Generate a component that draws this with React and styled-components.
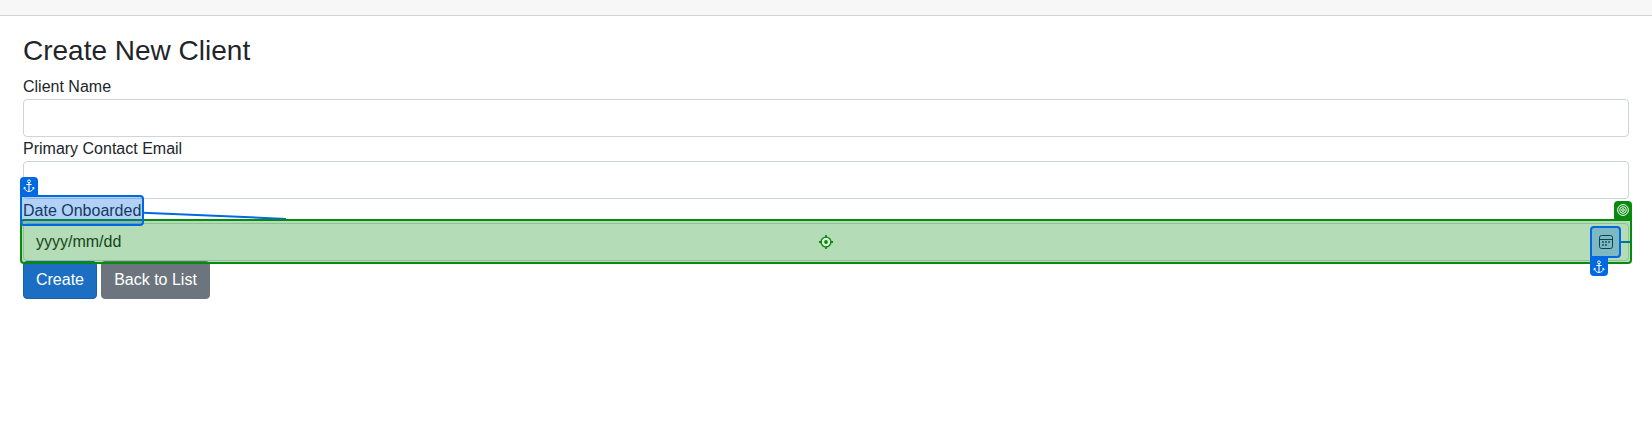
import React from "react";
import styled, { createGlobalStyle } from "styled-components";

const BLUE = "#0068e0";
const GREEN = "#078a0d";

const GlobalStyle = createGlobalStyle`
  *, *::before, *::after { box-sizing: border-box; }
  body {
    margin: 0;
    background: #fff;
    color: #212529;
    font: 400 16px/1.5 "Liberation Sans", Arial, sans-serif;
    overflow: hidden;
  }
`;

const Page = styled.div`
  min-height: 439px;
`;

const TopBar = styled.header`
  height: 16px;
  background: #f7f7f7;
  border-bottom: 1px solid #d2d4d6;
`;

const Form = styled.form`
  padding: 18px 23px 0;
`;

const Title = styled.h3`
  margin: 0 0 7px;
  font-size: 28px;
  font-weight: 400;
  line-height: 34px;
`;

const Field = styled.div`
  position: relative;
  display: flex;
  flex-direction: column;
  align-items: flex-start;
`;

const Label = styled.label`
  position: relative;
  height: 24px;
  line-height: 24px;
`;

const Control = styled.div`
  position: relative;
  display: flex;
  align-items: center;
  justify-content: space-between;
  width: 100%;
  height: 38px;
  padding: 0 15px 0 12px;
  border: 1px solid #ced4da;
  border-radius: 4px;
  background: #fff;
`;

const Actions = styled.div`
  display: flex;
  gap: 4px;
`;

const Button = styled.button`
  height: 38px;
  width: ${(p) => p.$width}px;
  padding: 0;
  border: 1px solid ${(p) => p.$border};
  border-radius: 4px;
  background: ${(p) => p.$color};
  color: #fff;
  font: inherit;
`;

const Highlight = styled.div`
  position: absolute;
  z-index: ${(p) => (p.$tone === "blue" ? 3 : 2)};
  inset: ${(p) => p.$inset};
  display: flex;
  align-items: center;
  justify-content: center;
  border: 2px solid ${(p) => (p.$tone === "blue" ? BLUE : GREEN)};
  border-radius: ${(p) => p.$radius || "4px"};
  background: ${(p) =>
    p.$tone === "blue" ? "rgba(0, 104, 224, 0.3)" : "rgba(7, 138, 13, 0.3)"};
`;

const Badge = styled.span`
  position: absolute;
  display: flex;
  align-items: center;
  justify-content: center;
  width: 18px;
  height: 18px;
  ${(p) => (p.$below ? "top: calc(100% + 2px);" : "bottom: calc(100% + 2px);")}
  ${(p) => (p.$right ? "right: -2px;" : "left: -2px;")}
  border-radius: ${(p) => (p.$below ? "0 0 4px 4px" : "4px 4px 0 0")};
  background: ${(p) => (p.$tone === "blue" ? BLUE : GREEN)};
  svg { flex: none; }
`;

const Connector = styled.svg`
  position: absolute;
  z-index: 1;
  left: ${(p) => p.$left};
  top: ${(p) => p.$top};
  overflow: visible;
`;

const PickerButton = styled.span`
  position: relative;
  display: flex;
  width: 14px;
  height: 14px;
`;

function AnchorIcon() {
  return (
    <svg width="12" height="14" viewBox="0 0 12 14" fill="none" stroke="#fff">
      <circle cx="6" cy="2.3" r="1.4" strokeWidth="1" />
      <path d="M6 3.8v8.7M3.3 5.5h5.4" strokeWidth="1.1" />
      <path d="M1.4 8.6c.4 2.3 2 3.7 4.6 3.9 2.6-.2 4.2-1.6 4.6-3.9M.8 9.7l.6-1.4 1.4.7M11.2 9.7l-.6-1.4-1.4.7" strokeWidth="1" />
    </svg>
  );
}

function RingsIcon() {
  return (
    <svg width="12" height="12" viewBox="0 0 12 12" fill="none" stroke="#fff">
      <circle cx="6" cy="6" r="5.4" />
      <circle cx="6" cy="6" r="3.3" />
      <circle cx="6" cy="6" r="1.3" />
    </svg>
  );
}

function CrosshairIcon() {
  return (
    <svg width="14" height="14" viewBox="0 0 14 14" fill="none" stroke={GREEN}>
      <circle cx="7" cy="7" r="4.9" fill="#e0f2e0" strokeWidth="1.4" />
      <circle cx="7" cy="7" r="1.9" fill={GREEN} stroke="none" />
      <path d="M7 0v2.6M7 11.4v2.6M0 7h2.6M11.4 7h2.6" strokeWidth="1.8" />
    </svg>
  );
}

function CalendarIcon() {
  return (
    <svg width="14" height="14" viewBox="0 0 14 14" fill="none" stroke="#111">
      <rect x=".5" y=".5" width="13" height="13" rx="2" />
      <path d="M1 4.5h12" />
      <path d="M3.1 7h1.7M6.1 7h1.7M9.1 7h1.7M3.1 10h1.7M6.1 10h1.7" strokeWidth="1.7" />
    </svg>
  );
}

export default function App() {
  return (
    <Page>
      <GlobalStyle />
      <TopBar />
      <Form>
        <Title>Create New Client</Title>
        <Field>
          <Label>Client Name</Label>
          <Control />
        </Field>
        <Field>
          <Label>Primary Contact Email</Label>
          <Control />
        </Field>
        <Field>
          <Label>
            Date Onboarded
            <Highlight $tone="blue" $inset="-4px -3px -3px -3px" $radius="0 4px 4px 4px">
              <Badge $tone="blue"><AnchorIcon /></Badge>
            </Highlight>
          </Label>
          <Connector $left="120px" $top="13px" width="144" height="8">
            <path d="M0 .8L143 6.9" stroke={BLUE} strokeWidth="2" />
          </Connector>
          <Control>
            <span>yyyy/mm/dd</span>
            <PickerButton>
              <CalendarIcon />
              <Highlight $tone="blue" $inset="-9px -8px -9px -9px" $radius="4px 4px 4px 0">
                <Badge $tone="blue" $below><AnchorIcon /></Badge>
              </Highlight>
            </PickerButton>
            <Connector $left="calc(100% - 8px)" $top="17px" width="11" height="2">
              <path d="M0 1h10.5" stroke={BLUE} strokeWidth="2" />
            </Connector>
            <Highlight $tone="green" $inset="-5px -4px -4px -4px" $radius="4px 0 4px 4px">
              <CrosshairIcon />
              <Badge $tone="green" $right><RingsIcon /></Badge>
            </Highlight>
          </Control>
        </Field>
        <Actions>
          <Button type="button" $width={74} $color="#1b6ec2" $border="#1861ac">Create</Button>
          <Button type="button" $width={109} $color="#6c757d" $border="#6c757d">Back to List</Button>
        </Actions>
      </Form>
    </Page>
  );
}
